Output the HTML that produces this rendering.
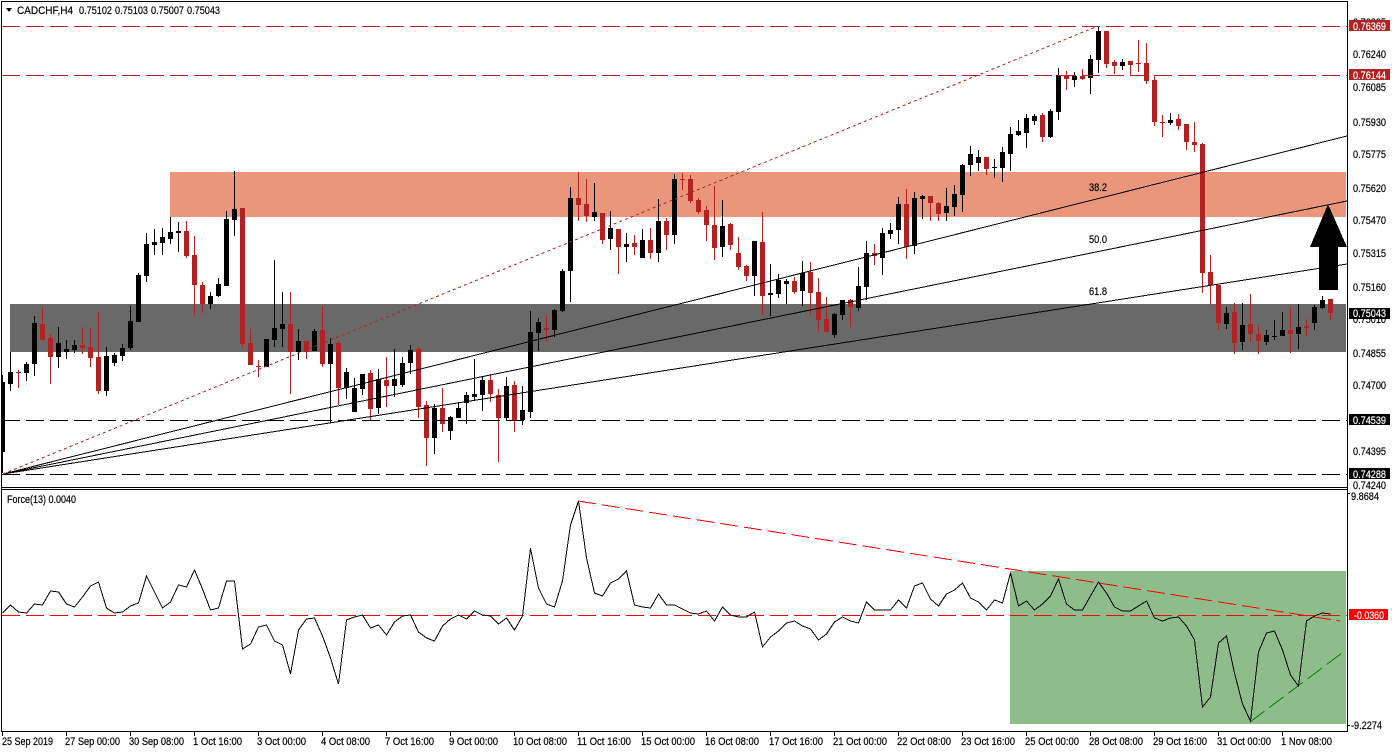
<!DOCTYPE html>
<html><head><meta charset="utf-8"><title>CADCHF,H4</title>
<style>html,body{margin:0;padding:0;background:#fff;width:1392px;height:752px;overflow:hidden}svg{display:block}
text{font-family:"Liberation Sans",sans-serif;font-size:11px;fill:#000;stroke:#000;stroke-width:.2}
.w{fill:#fff;stroke:#fff}</style></head><body>
<svg width="1392" height="752" viewBox="0 0 1392 752" xmlns="http://www.w3.org/2000/svg">
<rect width="1392" height="752" fill="#fff"/>
<g shape-rendering="crispEdges">
<rect x="170" y="172" width="1176" height="45" fill="#E9967A"/>
<rect x="10" y="304" width="1336" height="48" fill="#696969"/>
<rect x="1010" y="571" width="336" height="153" fill="#8FBC8B"/>
<!-- black candles -->
<path fill="#000" d="M2 375h1V473h-1zM2 382h3V452h-3zM10 352h1V391h-1zM8 372h5V384h-5zM26 362h1V381h-1zM24 364h5V373h-5zM34 316h1V376h-1zM32 323h5V364h-5zM58 327h1V368h-1zM56 343h5V357h-5zM66 340h1V359h-1zM64 349h5V352h-5zM74 340h1V353h-1zM72 345h5V350h-5zM106 347h1V396h-1zM104 356h5V391h-5zM114 353h1V366h-1zM112 355h5V363h-5zM122 344h1V361h-1zM120 348h5V356h-5zM130 306h1V350h-1zM128 321h5V348h-5zM138 273h1V322h-1zM136 275h5V322h-5zM146 233h1V282h-1zM144 244h5V276h-5zM154 229h1V255h-1zM152 242h5V245h-5zM162 228h1V255h-1zM160 237h5V243h-5zM170 217h1V244h-1zM168 232h5V239h-5zM178 222h1V252h-1zM176 231h5V233h-5zM210 292h1V309h-1zM208 296h5V304h-5zM218 278h1V297h-1zM216 284h5V296h-5zM226 211h1V286h-1zM224 219h5V286h-5zM234 171h1V236h-1zM232 209h5V220h-5zM266 339h1V367h-1zM264 339h5V367h-5zM274 260h1V347h-1zM272 328h5V340h-5zM282 292h1V347h-1zM280 324h5V329h-5zM298 329h1V360h-1zM296 341h5V352h-5zM314 329h1V351h-1zM312 331h5V351h-5zM330 338h1V423h-1zM328 344h5V364h-5zM346 368h1V399h-1zM344 372h5V388h-5zM354 378h1V412h-1zM352 388h5V412h-5zM362 374h1V395h-1zM360 374h5V389h-5zM378 369h1V414h-1zM376 379h5V408h-5zM394 349h1V397h-1zM392 379h5V386h-5zM402 357h1V387h-1zM400 363h5V385h-5zM410 345h1V374h-1zM408 350h5V363h-5zM434 404h1V454h-1zM432 408h5V438h-5zM450 416h1V440h-1zM448 417h5V431h-5zM458 402h1V418h-1zM456 408h5V418h-5zM466 392h1V424h-1zM464 395h5V403h-5zM474 359h1V401h-1zM472 394h5V397h-5zM482 377h1V411h-1zM480 380h5V395h-5zM506 377h1V421h-1zM504 386h5V418h-5zM522 386h1V425h-1zM520 410h5V420h-5zM530 311h1V418h-1zM528 332h5V412h-5zM538 318h1V351h-1zM536 322h5V333h-5zM554 309h1V337h-1zM552 310h5V330h-5zM562 269h1V312h-1zM560 271h5V311h-5zM570 187h1V302h-1zM568 198h5V271h-5zM594 183h1V221h-1zM592 212h5V217h-5zM610 211h1V250h-1zM608 228h5V239h-5zM626 233h1V262h-1zM624 244h5V247h-5zM642 229h1V258h-1zM640 240h5V258h-5zM658 199h1V262h-1zM656 221h5V253h-5zM674 174h1V244h-1zM672 179h5V235h-5zM722 200h1V257h-1zM720 226h5V247h-5zM754 241h1V296h-1zM752 241h5V276h-5zM770 264h1V316h-1zM768 293h5V295h-5zM778 274h1V298h-1zM776 280h5V294h-5zM786 279h1V304h-1zM784 281h5V284h-5zM802 261h1V306h-1zM800 273h5V291h-5zM834 313h1V338h-1zM832 314h5V335h-5zM842 300h1V320h-1zM840 300h5V315h-5zM858 267h1V311h-1zM856 286h5V308h-5zM866 241h1V300h-1zM864 253h5V287h-5zM882 228h1V275h-1zM880 233h5V258h-5zM890 223h1V239h-1zM888 230h5V234h-5zM898 197h1V244h-1zM896 204h5V230h-5zM914 192h1V254h-1zM912 198h5V246h-5zM922 195h1V219h-1zM920 196h5V199h-5zM946 188h1V221h-1zM944 206h5V213h-5zM954 185h1V216h-1zM952 194h5V207h-5zM962 164h1V212h-1zM960 165h5V195h-5zM970 146h1V176h-1zM968 154h5V165h-5zM978 150h1V171h-1zM976 157h5V163h-5zM994 159h1V178h-1zM992 167h5V168h-5zM1002 147h1V182h-1zM1000 152h5V168h-5zM1010 127h1V171h-1zM1008 134h5V154h-5zM1018 120h1V136h-1zM1016 131h5V135h-5zM1026 114h1V148h-1zM1024 118h5V133h-5zM1034 114h1V125h-1zM1032 116h5V121h-5zM1050 109h1V138h-1zM1048 111h5V137h-5zM1058 68h1V120h-1zM1056 75h5V112h-5zM1074 72h1V87h-1zM1072 76h5V80h-5zM1090 55h1V94h-1zM1088 59h5V78h-5zM1098 26h1V73h-1zM1096 31h5V60h-5zM1122 59h1V70h-1zM1120 62h5V66h-5zM1170 113h1V125h-1zM1168 120h5V123h-5zM1226 307h1V329h-1zM1224 313h5V324h-5zM1242 303h1V350h-1zM1240 325h5V342h-5zM1266 330h1V345h-1zM1264 335h5V342h-5zM1274 320h1V340h-1zM1272 336h5V337h-5zM1282 312h1V336h-1zM1280 330h5V336h-5zM1298 304h1V349h-1zM1296 327h5V334h-5zM1314 305h1V330h-1zM1312 307h5V323h-5zM1322 296h1V309h-1zM1320 300h5V308h-5z"/>
<!-- red candles -->
<path fill="#B22222" d="M18 370h1V388h-1zM16 372h5V373h-5zM42 307h1V340h-1zM40 324h5V340h-5zM50 334h1V384h-1zM48 338h5V357h-5zM82 327h1V354h-1zM80 345h5V348h-5zM90 328h1V367h-1zM88 347h5V358h-5zM98 312h1V394h-1zM96 357h5V391h-5zM186 221h1V258h-1zM184 231h5V256h-5zM194 236h1V316h-1zM192 255h5V285h-5zM202 282h1V313h-1zM200 285h5V304h-5zM242 208h1V348h-1zM240 208h5V344h-5zM250 329h1V365h-1zM248 343h5V365h-5zM258 360h1V377h-1zM256 366h5V367h-5zM290 292h1V394h-1zM288 324h5V352h-5zM306 341h1V359h-1zM304 341h5V352h-5zM322 306h1V367h-1zM320 330h5V364h-5zM338 341h1V405h-1zM336 343h5V388h-5zM370 370h1V420h-1zM368 373h5V409h-5zM386 357h1V407h-1zM384 380h5V386h-5zM418 347h1V418h-1zM416 349h5V407h-5zM426 401h1V466h-1zM424 405h5V438h-5zM442 388h1V432h-1zM440 408h5V424h-5zM490 374h1V402h-1zM488 380h5V394h-5zM498 389h1V462h-1zM496 395h5V418h-5zM514 381h1V432h-1zM512 385h5V420h-5zM546 315h1V341h-1zM544 328h5V330h-5zM578 172h1V221h-1zM576 198h5V205h-5zM586 179h1V222h-1zM584 204h5V216h-5zM602 213h1V244h-1zM600 213h5V240h-5zM618 229h1V274h-1zM616 229h5V247h-5zM634 235h1V255h-1zM632 243h5V247h-5zM650 228h1V259h-1zM648 240h5V253h-5zM666 218h1V250h-1zM664 221h5V235h-5zM682 173h1V190h-1zM680 179h5V180h-5zM690 175h1V203h-1zM688 179h5V201h-5zM698 198h1V214h-1zM696 200h5V212h-5zM706 206h1V241h-1zM704 210h5V225h-5zM714 186h1V260h-1zM712 225h5V248h-5zM730 223h1V250h-1zM728 224h5V245h-5zM738 237h1V270h-1zM736 253h5V267h-5zM746 265h1V281h-1zM744 266h5V276h-5zM762 212h1V315h-1zM760 242h5V296h-5zM794 277h1V294h-1zM792 281h5V292h-5zM810 262h1V315h-1zM808 272h5V293h-5zM818 278h1V332h-1zM816 292h5V320h-5zM826 297h1V333h-1zM824 319h5V332h-5zM850 299h1V327h-1zM848 300h5V307h-5zM874 244h1V265h-1zM872 253h5V256h-5zM906 189h1V259h-1zM904 204h5V247h-5zM930 196h1V221h-1zM928 196h5V203h-5zM938 202h1V221h-1zM936 203h5V214h-5zM986 157h1V175h-1zM984 157h5V169h-5zM1042 113h1V142h-1zM1040 115h5V137h-5zM1066 71h1V90h-1zM1064 75h5V79h-5zM1082 69h1V80h-1zM1080 76h5V79h-5zM1106 31h1V68h-1zM1104 31h5V64h-5zM1114 60h1V74h-1zM1112 62h5V66h-5zM1130 61h1V76h-1zM1128 61h5V65h-5zM1138 40h1V72h-1zM1136 63h5V64h-5zM1146 43h1V84h-1zM1144 63h5V81h-5zM1154 75h1V126h-1zM1152 80h5V122h-5zM1162 115h1V137h-1zM1160 122h5V123h-5zM1178 114h1V130h-1zM1176 119h5V126h-5zM1186 124h1V150h-1zM1184 124h5V142h-5zM1194 122h1V152h-1zM1192 142h5V145h-5zM1202 143h1V293h-1zM1200 144h5V273h-5zM1210 255h1V305h-1zM1208 272h5V285h-5zM1218 285h1V330h-1zM1216 285h5V323h-5zM1234 303h1V354h-1zM1232 312h5V343h-5zM1250 294h1V342h-1zM1248 324h5V334h-5zM1258 325h1V354h-1zM1256 334h5V341h-5zM1290 307h1V353h-1zM1288 330h5V334h-5zM1306 319h1V336h-1zM1304 326h5V328h-5zM1330 299h1V320h-1zM1328 299h5V313h-5z"/>
<!-- horizontal levels -->
<g fill="none" stroke-width="1" stroke-dasharray="18 6">
<path d="M2 26.5H1347M2 75.5H1347" stroke="#B22222"/>
<path d="M2 420.5H1347M2 474.5H1347" stroke="#000"/>
<path d="M2 615.5H1347" stroke="#f00"/>
<path d="M578 501L1340 621" stroke="#f00"/>
<path d="M1250 722L1346 650" stroke="#008000"/>
</g>
<!-- fib fan -->
<path fill="none" stroke="#000" d="M3 474L1347 136M3 474L1347 201M3 474L1347 264"/>
<path fill="none" stroke="#B22222" stroke-dasharray="3 3" d="M3 474L1098 26"/>
<!-- arrow -->
<path fill="#000" d="M1328 204L1347 247H1338V290H1319V247H1310Z"/>
<!-- force -->
<polyline fill="none" stroke="#000" points="2.5,613 10.5,605 18.5,612 26.5,613 34.5,604 42.5,605 50.5,591 58.5,592 66.5,604 74.5,607 82.5,597 90.5,586 98.5,582 106.5,608 114.5,613 122.5,612 130.5,606 138.5,603 146.5,576 154.5,592 162.5,608 170.5,602 178.5,585 186.5,587 194.5,570 202.5,589 210.5,610 218.5,608 226.5,581 234.5,581 242.5,649 250.5,644 258.5,627 266.5,625 274.5,641 282.5,645 290.5,674 298.5,630 306.5,619 314.5,618 322.5,636 330.5,658 338.5,684 346.5,620 354.5,617 362.5,615 370.5,628 378.5,625 386.5,635 394.5,622 402.5,616 410.5,615 418.5,632 426.5,638 434.5,641 442.5,626 450.5,619 458.5,615 466.5,619 474.5,611 482.5,615 490.5,616 498.5,624 506.5,618 514.5,630 522.5,616 530.5,548 538.5,588 546.5,604 554.5,607 562.5,581 570.5,525 578.5,501 586.5,558 594.5,593 602.5,596 610.5,583 618.5,579 626.5,571 634.5,605 642.5,607 650.5,608 658.5,594 666.5,605 674.5,605 682.5,609 690.5,613 698.5,614 706.5,611 714.5,621 722.5,607 730.5,615 738.5,617 746.5,617 754.5,612 762.5,647 770.5,637 778.5,631 786.5,623 794.5,621 802.5,626 810.5,629 818.5,640 826.5,634 834.5,622 842.5,617 850.5,621 858.5,623 866.5,602 874.5,610 882.5,610 890.5,610 898.5,600 906.5,608 914.5,586 922.5,583 930.5,599 938.5,606 946.5,594 954.5,590 962.5,583 970.5,598 978.5,602 986.5,610 994.5,600 1002.5,603 1010.5,573 1018.5,606 1026.5,601 1034.5,610 1042.5,604 1050.5,596 1058.5,579 1066.5,604 1074.5,610 1082.5,610 1090.5,596 1098.5,582 1106.5,593 1114.5,607 1122.5,611 1130.5,611 1138.5,606 1146.5,601 1154.5,618 1162.5,621 1170.5,618 1178.5,617 1186.5,626 1194.5,640 1202.5,707 1210.5,697 1218.5,643 1226.5,636 1234.5,673 1242.5,704 1250.5,721 1258.5,652 1266.5,633 1274.5,631 1282.5,650 1290.5,675 1298.5,686 1306.5,621 1314.5,616 1322.5,613 1330.5,614"/>
<!-- frames -->
<path fill="#000" d="M1 1H1348V2H1V1ZM1 1H2V732H1ZM1347 1H1348V732H1347ZM1 487H1348V488H1ZM1 489H1348V490H1ZM1 731H1348V732H1Z"/>
<path fill="#000" d="M2 732h1v4h-1zM66 732h1v4h-1zM130 732h1v4h-1zM194 732h1v4h-1zM258 732h1v4h-1zM322 732h1v4h-1zM386 732h1v4h-1zM450 732h1v4h-1zM514 732h1v4h-1zM578 732h1v4h-1zM642 732h1v4h-1zM706 732h1v4h-1zM770 732h1v4h-1zM834 732h1v4h-1zM898 732h1v4h-1zM962 732h1v4h-1zM1026 732h1v4h-1zM1090 732h1v4h-1zM1154 732h1v4h-1zM1218 732h1v4h-1zM1282 732h1v4h-1zM1348 493h2v1h-2zM1348 725h2v1h-2z"/>
<path fill="#000" d="M6 8H12L9 12Z"/>
</g>
<!-- title -->
<text x="17" y="14" textLength="56" lengthAdjust="spacingAndGlyphs">CADCHF,H4</text>
<text x="79" y="14" textLength="33" lengthAdjust="spacingAndGlyphs">0.75102</text>
<text x="115" y="14" textLength="33" lengthAdjust="spacingAndGlyphs">0.75103</text>
<text x="151" y="14" textLength="33" lengthAdjust="spacingAndGlyphs">0.75007</text>
<text x="187" y="14" textLength="33" lengthAdjust="spacingAndGlyphs">0.75043</text>
<text x="7" y="503" textLength="69" lengthAdjust="spacingAndGlyphs">Force(13) 0.0040</text>
<!-- fib labels -->
<text x="1089" y="191" textLength="18" lengthAdjust="spacingAndGlyphs">38.2</text>
<text x="1089" y="243" textLength="18" lengthAdjust="spacingAndGlyphs">50.0</text>
<text x="1089" y="295" textLength="18" lengthAdjust="spacingAndGlyphs">61.8</text>
<!-- price axis -->
<text x="1353" y="26" textLength="33" lengthAdjust="spacingAndGlyphs">0.76395</text>
<text x="1353" y="58" textLength="33" lengthAdjust="spacingAndGlyphs">0.76240</text>
<text x="1353" y="91" textLength="33" lengthAdjust="spacingAndGlyphs">0.76085</text>
<text x="1353" y="126" textLength="33" lengthAdjust="spacingAndGlyphs">0.75930</text>
<text x="1353" y="158" textLength="33" lengthAdjust="spacingAndGlyphs">0.75775</text>
<text x="1353" y="192" textLength="33" lengthAdjust="spacingAndGlyphs">0.75620</text>
<text x="1353" y="224" textLength="33" lengthAdjust="spacingAndGlyphs">0.75470</text>
<text x="1353" y="257" textLength="33" lengthAdjust="spacingAndGlyphs">0.75315</text>
<text x="1353" y="291" textLength="33" lengthAdjust="spacingAndGlyphs">0.75160</text>
<text x="1353" y="323" textLength="33" lengthAdjust="spacingAndGlyphs">0.75010</text>
<text x="1353" y="357" textLength="33" lengthAdjust="spacingAndGlyphs">0.74855</text>
<text x="1353" y="389" textLength="33" lengthAdjust="spacingAndGlyphs">0.74700</text>
<text x="1353" y="455" textLength="33" lengthAdjust="spacingAndGlyphs">0.74395</text>
<text x="1353" y="489" textLength="33" lengthAdjust="spacingAndGlyphs">0.74240</text>
<g shape-rendering="crispEdges">
<rect x="1349" y="20" width="41" height="11" fill="#B22222"/>
<rect x="1349" y="69" width="41" height="11" fill="#B22222"/>
<rect x="1349" y="308" width="41" height="11" fill="#000"/>
<rect x="1349" y="414" width="41" height="11" fill="#000"/>
<rect x="1349" y="468" width="41" height="11" fill="#000"/>
<rect x="1349" y="609" width="39" height="11" fill="#f00"/>
</g>
<text class="w" x="1353" y="30" textLength="33" lengthAdjust="spacingAndGlyphs">0.76369</text>
<text class="w" x="1353" y="79" textLength="33" lengthAdjust="spacingAndGlyphs">0.76144</text>
<text class="w" x="1353" y="317" textLength="33" lengthAdjust="spacingAndGlyphs">0.75043</text>
<text class="w" x="1353" y="424" textLength="33" lengthAdjust="spacingAndGlyphs">0.74539</text>
<text class="w" x="1353" y="478" textLength="33" lengthAdjust="spacingAndGlyphs">0.74288</text>
<text class="w" x="1354" y="619" textLength="30" lengthAdjust="spacingAndGlyphs">-0.0360</text>
<text x="1351" y="500" textLength="28" lengthAdjust="spacingAndGlyphs">9.8684</text>
<text x="1351" y="729" textLength="31" lengthAdjust="spacingAndGlyphs">-9.2274</text>
<!-- time axis -->
<text x="2" y="745" textLength="51" lengthAdjust="spacingAndGlyphs">25 Sep 2019</text>
<text x="65" y="745" textLength="55" lengthAdjust="spacingAndGlyphs">27 Sep 00:00</text>
<text x="129" y="745" textLength="55" lengthAdjust="spacingAndGlyphs">30 Sep 08:00</text>
<text x="193" y="745" textLength="49" lengthAdjust="spacingAndGlyphs">1 Oct 16:00</text>
<text x="257" y="745" textLength="49" lengthAdjust="spacingAndGlyphs">3 Oct 00:00</text>
<text x="321" y="745" textLength="49" lengthAdjust="spacingAndGlyphs">4 Oct 08:00</text>
<text x="385" y="745" textLength="49" lengthAdjust="spacingAndGlyphs">7 Oct 16:00</text>
<text x="449" y="745" textLength="49" lengthAdjust="spacingAndGlyphs">9 Oct 00:00</text>
<text x="513" y="745" textLength="54" lengthAdjust="spacingAndGlyphs">10 Oct 08:00</text>
<text x="577" y="745" textLength="54" lengthAdjust="spacingAndGlyphs">11 Oct 16:00</text>
<text x="641" y="745" textLength="54" lengthAdjust="spacingAndGlyphs">15 Oct 00:00</text>
<text x="705" y="745" textLength="54" lengthAdjust="spacingAndGlyphs">16 Oct 08:00</text>
<text x="769" y="745" textLength="54" lengthAdjust="spacingAndGlyphs">17 Oct 16:00</text>
<text x="833" y="745" textLength="54" lengthAdjust="spacingAndGlyphs">21 Oct 00:00</text>
<text x="897" y="745" textLength="54" lengthAdjust="spacingAndGlyphs">22 Oct 08:00</text>
<text x="961" y="745" textLength="54" lengthAdjust="spacingAndGlyphs">23 Oct 16:00</text>
<text x="1025" y="745" textLength="54" lengthAdjust="spacingAndGlyphs">25 Oct 00:00</text>
<text x="1089" y="745" textLength="54" lengthAdjust="spacingAndGlyphs">28 Oct 08:00</text>
<text x="1153" y="745" textLength="54" lengthAdjust="spacingAndGlyphs">29 Oct 16:00</text>
<text x="1217" y="745" textLength="54" lengthAdjust="spacingAndGlyphs">31 Oct 00:00</text>
<text x="1281" y="745" textLength="51" lengthAdjust="spacingAndGlyphs">1 Nov 08:00</text>
</svg>
</body></html>
